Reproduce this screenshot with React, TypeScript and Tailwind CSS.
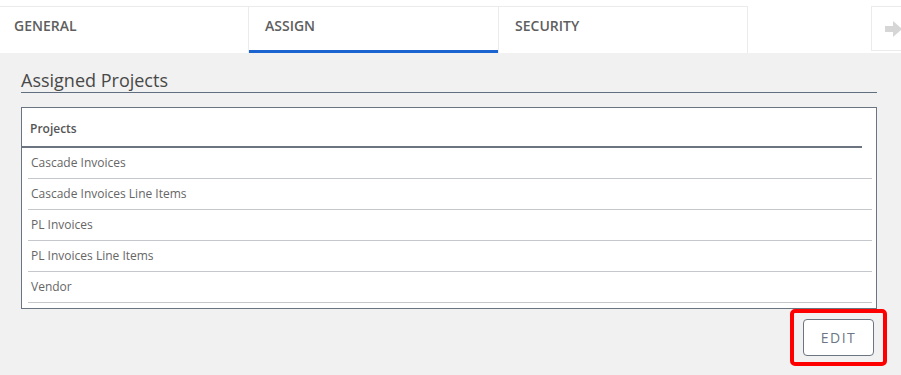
import React from 'react';

const projects = [
  'Cascade Invoices',
  'Cascade Invoices Line Items',
  'PL Invoices',
  'PL Invoices Line Items',
  'Vendor',
];

const tabs = [
  { label: 'GENERAL', active: false },
  { label: 'ASSIGN', active: true },
  { label: 'SECURITY', active: false },
];

export default function App() {
  return (
    <div
      className="w-[901px] h-[375px] overflow-hidden bg-[#f0f1f0]"
      style={{ fontFamily: '"Open Sans", "Noto Sans", sans-serif' }}
    >
      {/* Tab bar */}
      <div className="flex h-[53px] bg-white pt-[6px]">
        {tabs.map((t, i) => (
          <div
            key={t.label}
            className={`relative h-[47px] border-t border-[#ebebeb] ${
              i === 0 ? 'w-[248px] pl-[14px]' : 'w-[250px] border-l pl-[16px]'
            } ${i === tabs.length - 1 ? 'border-r' : ''} pt-[9px] text-[14px] font-semibold leading-[20px] text-[#5e5e5e]`}
          >
            {t.label}
            {t.active && (
              <div className="absolute left-0 right-0 bottom-0 h-[3px] bg-[#1b63cf]" />
            )}
          </div>
        ))}
        <div className="flex-1" />
        <div className="w-[30px] h-[45px] border-t border-l border-b border-[#ebebeb] flex items-center pl-[13px]">
          <svg width="17" height="16" viewBox="0 0 17 16" className="shrink-0">
            <path d="M0 5h8V0l9 8-9 8v-5H0z" fill="#d6d6d6" />
          </svg>
        </div>
      </div>

      {/* Content */}
      <div className="px-[21px] pr-[24px]">
        <div className="pt-[15px] border-b border-[#5f6f80]">
          <h2 className="text-[18px] leading-[24px] text-[#484848] font-normal">Assigned Projects</h2>
        </div>

        <div className="mt-[14px] bg-white border border-[#6b7582] pb-[5px]">
          <div className="mr-[14px] h-[40px] border-b-2 border-[#6b7480] pl-[8px] flex items-center pt-[3px]">
            <span className="text-[12px] font-semibold text-[#555]">Projects</span>
          </div>
          {projects.map((p) => (
            <div
              key={p}
              className="ml-[6px] mr-[4px] h-[31px] border-b border-[#c4c8cd] pl-[3px] flex items-center"
            >
              <span className="text-[12px] text-[#666]">{p}</span>
            </div>
          ))}
        </div>

        <div className="flex justify-end mt-[10px] pr-[3px]">
          <div className="relative">
            <button className="w-[71px] h-[37px] rounded-[4px] border border-[#6b7582] bg-white text-[14px] tracking-[1.5px] text-[#6b7686]">
              EDIT
            </button>
            <div className="absolute left-[-13px] top-[-10px] w-[97px] h-[57px] border-4 border-[#ff0000] rounded-[5px]" />
          </div>
        </div>
      </div>
    </div>
  );
}
